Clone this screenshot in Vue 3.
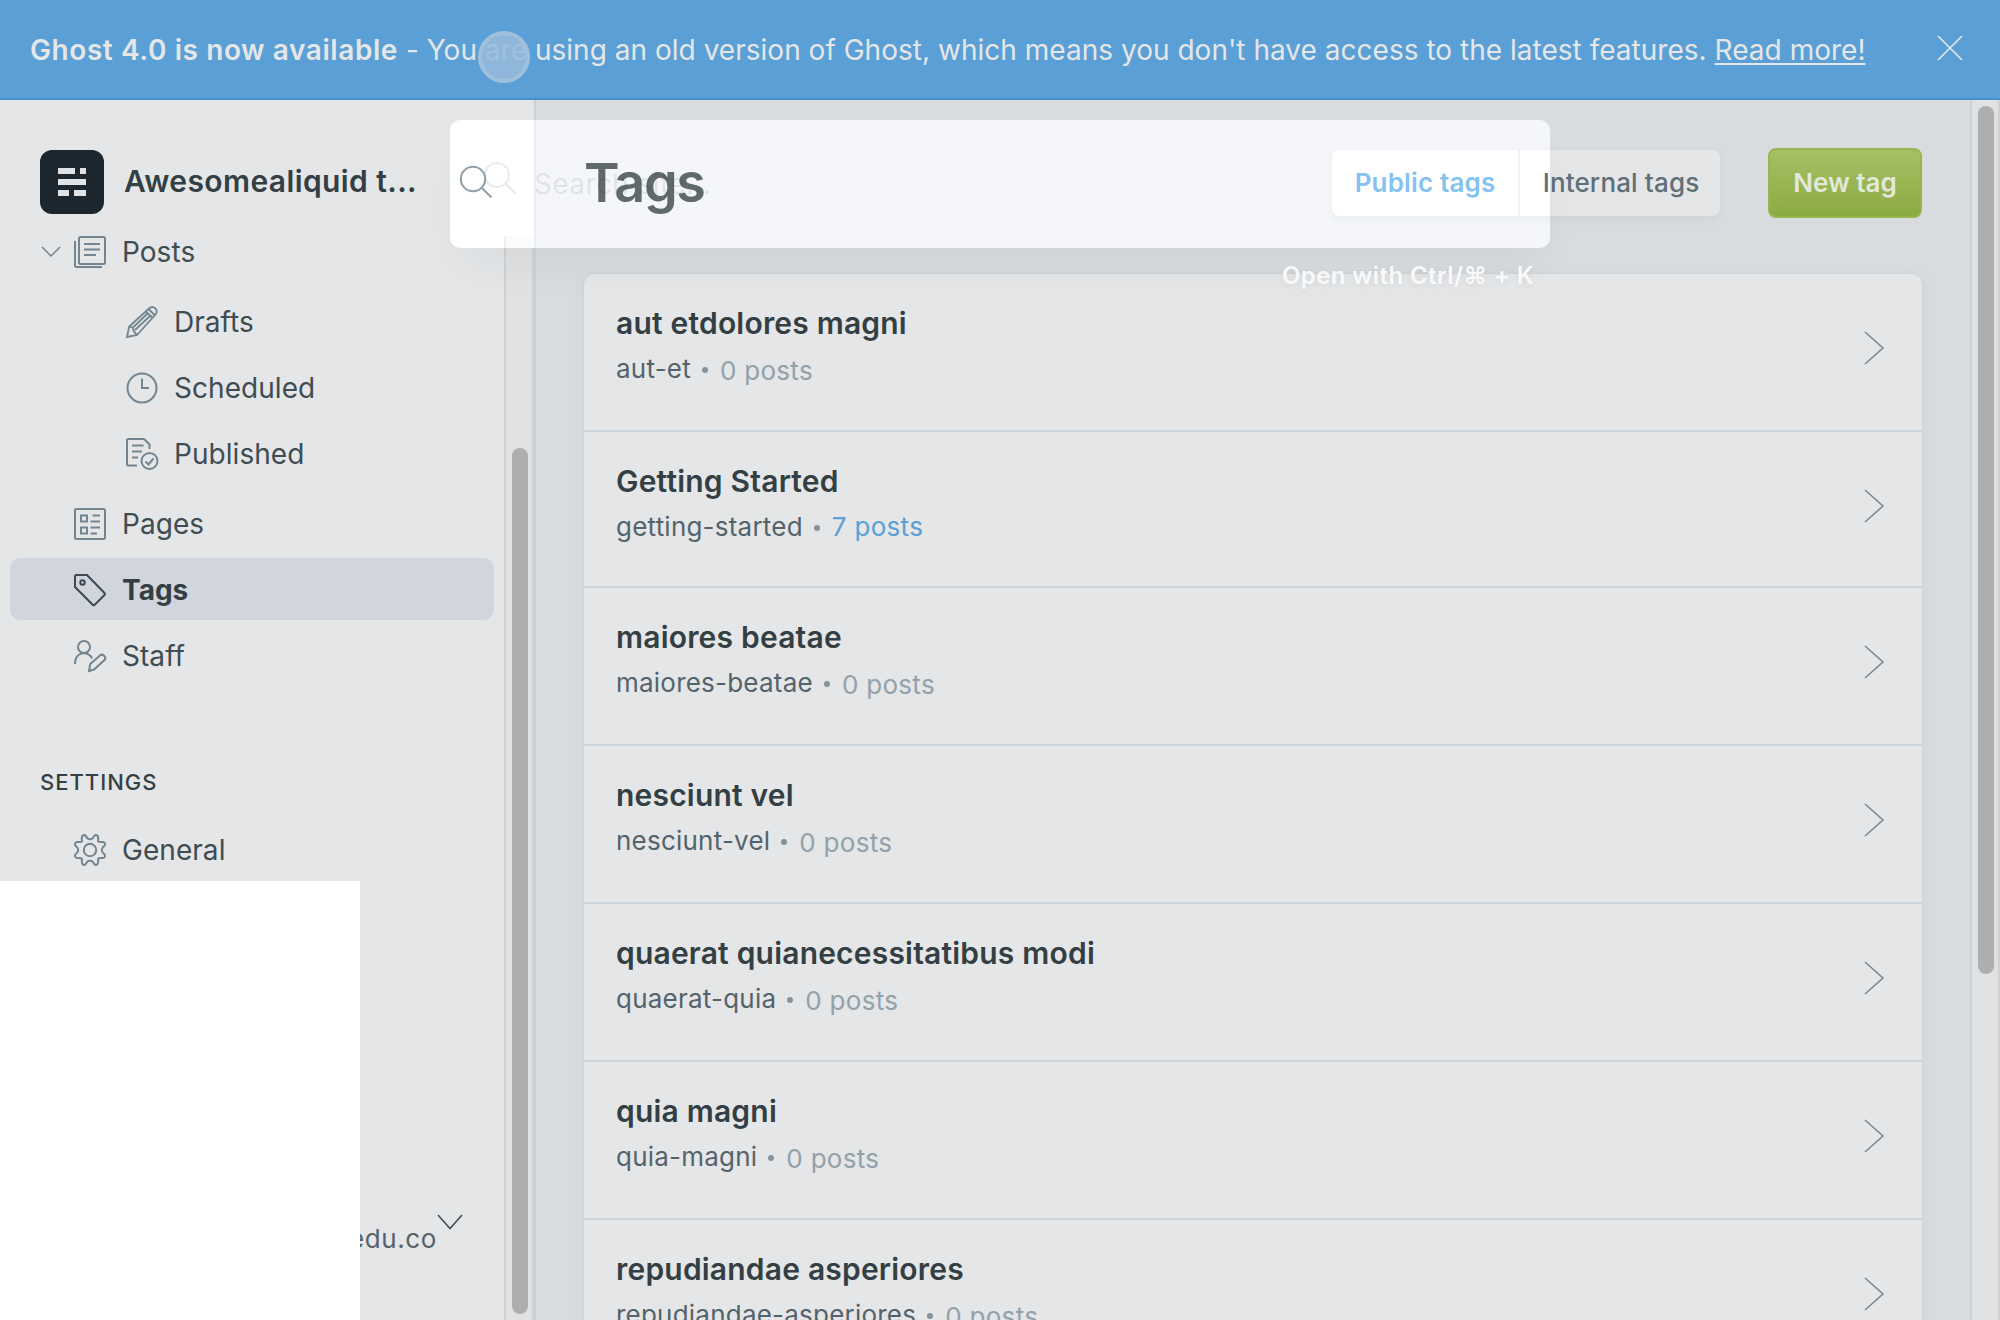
<script setup>
const tags = [
  { name: 'aut etdolores magni', slug: 'aut-et', posts: 0 },
  { name: 'Getting Started', slug: 'getting-started', posts: 7 },
  { name: 'maiores beatae', slug: 'maiores-beatae', posts: 0 },
  { name: 'nesciunt vel', slug: 'nesciunt-vel', posts: 0 },
  { name: 'quaerat quianecessitatibus modi', slug: 'quaerat-quia', posts: 0 },
  { name: 'quia magni', slug: 'quia-magni', posts: 0 },
  { name: 'repudiandae asperiores', slug: 'repudiandae-asperiores', posts: 0 },
]
</script>

<template>
  <div class="app">
    <div class="banner">
      <p><strong>Ghost 4.0 is now available</strong><span class="msg"> - You are using an old version of Ghost, which means you don't have access to the latest features. <a>Read more!</a></span></p>
      <svg class="close" viewBox="0 0 24 24"><path d="M0 0L24 24M24 0L0 24" /></svg>
      <span class="pointer"></span>
    </div>

    <div class="body">
      <aside class="sidebar">
        <header class="site">
          <svg class="logo" viewBox="0 0 64 64">
            <rect width="64" height="64" rx="12" fill="#1b262f" />
            <path fill="#dfe3e6" d="M18 18h17v6H18zM40 18h6v6h-6zM18 29h28v6H18zM18 40h11v6H18zM34 40h12v6H34z" />
          </svg>
          <span class="site-name">Awesomealiquid t...</span>
          <svg class="search-ico" viewBox="0 0 32 32"><circle cx="13" cy="13" r="12.2" /><path d="M22 22l9.500 9.500" /></svg>
        </header>

        <div class="nav-wrap">
          <nav>
            <a class="item posts">
              <svg class="arrow" viewBox="0 0 18 10"><path d="M0 0l9 9 9-9" /></svg>
              <svg class="ico" viewBox="0 0 32 32"><rect x="5" y="1" width="26" height="27" rx="1.5" /><path d="M1 5v24.500q0 1.500 1.500 1.500H28M10 8h16M10 13.500h16M10 19h12" /></svg>
              <span>Posts</span>
            </a>
            <a class="item sub">
              <svg class="ico" viewBox="0 0 32 32"><path d="M1 31l2.200-10.500L23 2.500c4.500-4 10 1.500 6.500 6L11 29zM3.200 20.500l3.500 1 1 3.500 3.300 4M20 5.500l6.500 6.500M22.500 3l6.500 6.500M7.500 21L21.500 7.500M9 24L24.500 9.500" stroke-width="1.800" /></svg>
              <span>Drafts</span>
            </a>
            <a class="item sub">
              <svg class="ico" viewBox="0 0 32 32"><circle cx="16" cy="16" r="14.500" /><path d="M16 6.500V16h7" /></svg>
              <span>Scheduled</span>
            </a>
            <a class="item sub">
              <svg class="ico" viewBox="0 0 32 32"><path d="M11 27.500H2.500Q1 27.500 1 26V2.500Q1 1 2.500 1H18l5.500 5.500V11M6 7.500h11.500M6 13.500h10M6 19.500h6" /><circle cx="23.500" cy="23" r="8" /><path d="M19.500 23.500l3 3 5-6" /></svg>
              <span>Published</span>
            </a>
            <a class="item pages">
              <svg class="ico" viewBox="0 0 32 32"><rect x="1" y="1" width="30" height="30" rx="1.500" /><rect x="7" y="7.500" width="6" height="6" /><rect x="7" y="19.500" width="6" height="6" /><path d="M18.500 7.500H26M16.500 13.500H26M16.500 19.500H26M16.500 25.500H23" /></svg>
              <span>Pages</span>
            </a>
            <a class="item active">
              <svg class="ico" viewBox="0 0 32 32"><path d="M1 2.500Q1 1 2.500 1H13L30.500 19Q31.500 20 30.500 21L20.500 31Q19.500 31.500 18.500 30.500L1 13z" /><circle cx="8.500" cy="8.500" r="2.200" /></svg>
              <span>Tags</span>
            </a>
            <a class="item">
              <svg class="ico" viewBox="0 0 32 32"><circle cx="10" cy="7" r="6" /><path d="M1 24C1 10.500 15.500 11 18 18.500M15 31l1.200-7L26 15.500c2.500-2.500 7 1.500 4.500 4.500L20 29.500z" /></svg>
              <span>Staff</span>
            </a>
            <h4>SETTINGS</h4>
            <a class="item general">
              <svg class="ico" viewBox="0 0 32 32"><circle cx="16" cy="16" r="6.200" /><path d="M13.100 4.200Q16 6.200 18.900 4.200Q20.200 .4 22.800 1.300Q24.800 2.100 24 7.300Q24.600 8.300 29 8Q31.800 8.600 30.700 11.500Q27.300 14.500 28 16Q27.300 17.500 30.700 20.500Q31.800 23.400 29 24Q24.600 23.700 24 24.700Q24.800 29.900 22.800 30.700Q20.200 31.600 18.900 27.800Q16 25.800 13.100 27.800Q11.800 31.600 9.200 30.700Q7.200 29.900 8 24.700Q7.400 23.700 3 24Q.2 23.400 1.300 20.500Q4.700 17.500 4 16Q4.700 14.500 1.300 11.500Q.2 8.600 3 8Q7.400 8.300 8 7.300Q7.200 2.100 9.200 1.300Q11.800 .4 13.100 4.200z" /></svg>
              <span>General</span>
            </a>
          </nav>
          <footer class="user">
            <span>edu.co</span>
            <svg viewBox="0 0 24 14"><path d="M0 0l12 13.500L24 0" /></svg>
          </footer>
          <div class="side-track"><i></i></div>
        </div>
      </aside>

      <main>
        <header class="head">
          <h1>Tags</h1>
          <div class="actions">
            <div class="tabs"><span class="public">Public tags</span><span class="internal">Internal tags</span></div>
            <button>New tag</button>
          </div>
        </header>
        <ul class="list">
          <li v-for="t in tags" :key="t.slug">
            <div>
              <h3>{{ t.name }}</h3>
              <p><span class="slug">{{ t.slug }}</span><i class="dot"></i><span class="count" :class="{ has: t.posts }">{{ t.posts }} posts</span></p>
            </div>
            <svg viewBox="0 0 20 34"><path d="M1 1l18 16L1 33" /></svg>
          </li>
        </ul>
      </main>
      <div class="main-track"><i></i></div>
    </div>

    <div class="search-panel">
      <svg viewBox="0 0 32 32"><circle cx="13" cy="13" r="12" /><path d="M22 22l9.500 9.500" /></svg>
    </div>
    <div class="search-shadow"><span>Search site...</span></div>
    <div class="hint">Open with Ctrl/⌘ + K</div>
    <div class="blank"></div>
  </div>
</template>

<style>
body { margin: 0; overflow: hidden; }
</style>

<style scoped>
* { box-sizing: border-box; }
.app { position: relative; width: 2000px; height: 1320px; overflow: hidden; background: #e4e6e8; font-family: Inter, "Noto Sans", sans-serif; font-feature-settings: "calt" 0; color: #343f44; letter-spacing: .4px; }
svg { fill: none; stroke: #738590; stroke-width: 2; display: block; overflow: visible; flex: none; }
h1, h3, h4, p, ul { margin: 0; padding: 0; }
.banner { position: relative; height: 100px; background: #5a9fd5; border-bottom: 2px solid #488fd0; color: #e4e6e8; display: flex; justify-content: space-between; padding: 0 38px 0 30px; font-size: 28px; line-height: 34px; white-space: nowrap; }
.banner p { padding-top: 33px; }
.banner strong { font-weight: 600; letter-spacing: .58px; }
.banner .msg { letter-spacing: .02px; }
.banner a { text-decoration: underline; text-decoration-thickness: 2px; text-underline-offset: 3px; }
.close { width: 24px; height: 24px; margin-top: 36px; stroke: #e4e6e8; stroke-width: 1.6; }
.pointer { position: absolute; left: 478px; top: 31px; width: 52px; height: 52px; border-radius: 50%; background: rgba(149,187,220,.88); border: 4px solid #9fc0dc; }
.body { display: flex; height: 1220px; }
.sidebar { position: relative; width: 536px; border-right: 2px solid #cad1d7; display: flex; flex-direction: column; background: #e4e6e8; }
.site { height: 136px; padding: 50px 0 0 40px; display: flex; position: relative; z-index: 3; }
.logo { width: 64px; height: 64px; stroke: none; }
.site-name { width: 336px; margin-left: 20px; font-size: 30px; line-height: 62px; font-weight: 600; white-space: nowrap; }
.search-ico { width: 32px; height: 32px; margin-top: 16px; stroke: #8f9da6; }
.nav-wrap { position: relative; flex: 1; display: flex; flex-direction: column; }
nav { padding: 0 40px 0 10px; width: 534px; }
.item { display: flex; align-items: center; width: 484px; height: 62px; margin-bottom: 4px; padding-left: 64px; border-radius: 10px; font-size: 28px; letter-spacing: .05px; color: #3f4c51; }
.item span { margin-left: 16px; }
.ico { width: 32px; height: 32px; }
.posts { position: relative; height: 32px; margin-bottom: 23px; }
.arrow { position: absolute; left: 32px; top: 11px; width: 18px; height: 10px; stroke-width: 1.500; }
.sub { padding-left: 116px; }
.pages { margin-top: 8px; }
.active { margin-top: -1px; margin-bottom: 5px; padding-top: 2px; background: #d0d5de; font-weight: 700; letter-spacing: 0; color: #343f44; }
.active .ico { stroke: #3f4650; }
h4 { margin: 81px 0 0 30px; font-size: 22px; line-height: 28px; font-weight: 500; letter-spacing: 1px; }
.general { margin-top: 23px; }
.user { margin-top: auto; height: 112px; display: flex; width: 462px; justify-content: flex-end; font-size: 26px; line-height: 32px; color: #54636b; letter-spacing: .6px; }
.user span { padding-top: 15px; }
.user svg { width: 24px; height: 14px; margin: 7px 0 0 1px; stroke: #3f4a50; stroke-width: 1.500; }
.side-track { position: absolute; left: 504px; top: 0; bottom: 0; width: 30px; background: #e0e1e2; border-left: 2px solid #d0d1d3; border-right: 2px solid #d0d1d3; }
.side-track i { position: absolute; left: 6px; top: 212px; width: 16px; height: 866px; border-radius: 8px; background: #adaeb0; }
main { width: 1434px; padding: 48px 48px 0 48px; background: #d8dcdf; }
.head { position: relative; z-index: 3; height: 126px; display: flex; justify-content: space-between; }
h1 { font-size: 54px; line-height: 70px; font-weight: 600; letter-spacing: -1.400px; color: #606a6c; }
.actions { display: flex; gap: 48px; font-size: 26px; font-weight: 500; letter-spacing: .15px; }
.tabs { display: flex; margin-top: 2px; height: 66px; line-height: 66px; border-radius: 8px; box-shadow: 0 4px 10px rgba(60,70,90,.05); }
.tabs span { text-align: center; white-space: nowrap; }
.public { width: 188px; background: #fff; color: #85c2f0; border-right: 2px solid #f0f3f6; border-radius: 8px 0 0 8px; font-weight: 600; }
.internal { width: 200px; padding-left: 2px; border-radius: 0 8px 8px 0; color: #5f6f78; background: linear-gradient(90deg, #fff 30px, #e4e6e8 30px); }
button { width: 154px; height: 70px; padding: 0 0 2px; border: 2px solid #98b64f; border-radius: 8px; background: linear-gradient(#a5c163, #8aaa43); font: 600 26px Inter, sans-serif; color: #e4e8dc; letter-spacing: 0; }
.list { list-style: none; border-radius: 10px; background: #e4e6e8; box-shadow: 0 0 0 1px #cfd4d9, 0 2px 14px rgba(80,90,140,.06); }
li { height: 158px; border-bottom: 2px solid #cdd5dc; display: flex; justify-content: space-between; padding: 31px 38px 0 32px; }
li:nth-child(2) { height: 156px; }
li svg { width: 20px; height: 34px; margin-top: 26px; stroke-width: 1.500; }
h3 { font-size: 30px; line-height: 36px; font-weight: 600; letter-spacing: .2px; }
li p { display: flex; align-items: center; margin-top: 12px; font-size: 26px; line-height: 32px; }
.slug { color: #54636b; letter-spacing: .22px; }
.dot { width: 6px; height: 6px; margin: 2px 12px 0 11px; border-radius: 50%; background: #84939c; }
.count { color: #93a1aa; position: relative; top: 2px; letter-spacing: .3px; }
.count.has { color: #5a9fd5; top: 0; }
.main-track { position: relative; width: 30px; background: #e0e1e2; border-left: 2px solid #d0d1d3; border-right: 2px solid #d0d1d3; }
.main-track i { position: absolute; left: 6px; top: 6px; width: 16px; height: 868px; border-radius: 8px; background: #adaeb0; }
.search-panel { position: absolute; z-index: 2; left: 450px; top: 120px; width: 1100px; height: 128px; border-radius: 10px; background: linear-gradient(#fff, #fff) 0 0 / 54px 128px no-repeat, linear-gradient(#fff 116px, #eff0f1 116px) 54px 0 / 2px 128px no-repeat, linear-gradient(#fff 116px, #fafbfb 116px) 0 0 / 84px 128px no-repeat, linear-gradient(#eaeef3, #eaeef3) 84px 0 / 2px 128px no-repeat, #f4f6fa; }
.search-panel svg { position: absolute; left: 34px; top: 42px; width: 32px; height: 32px; stroke: #e7ebee; }
.search-shadow { position: absolute; z-index: 4; left: 450px; top: 120px; width: 1100px; height: 128px; border-radius: 10px; box-shadow: 0 26px 48px -14px rgba(40,50,50,.06); }
.search-shadow span { position: absolute; left: 84px; top: 46px; font-size: 28px; line-height: 36px; color: rgba(30,40,50,.1); white-space: nowrap; }
.hint { position: absolute; z-index: 4; right: 466px; top: 260px; font-size: 24px; line-height: 32px; font-weight: 600; color: #f8f9f9; text-shadow: 0 2px 6px rgba(0,0,0,.06); white-space: nowrap; }
.blank { position: absolute; z-index: 5; left: 0; top: 881px; width: 360px; height: 439px; background: #fff; }
</style>
